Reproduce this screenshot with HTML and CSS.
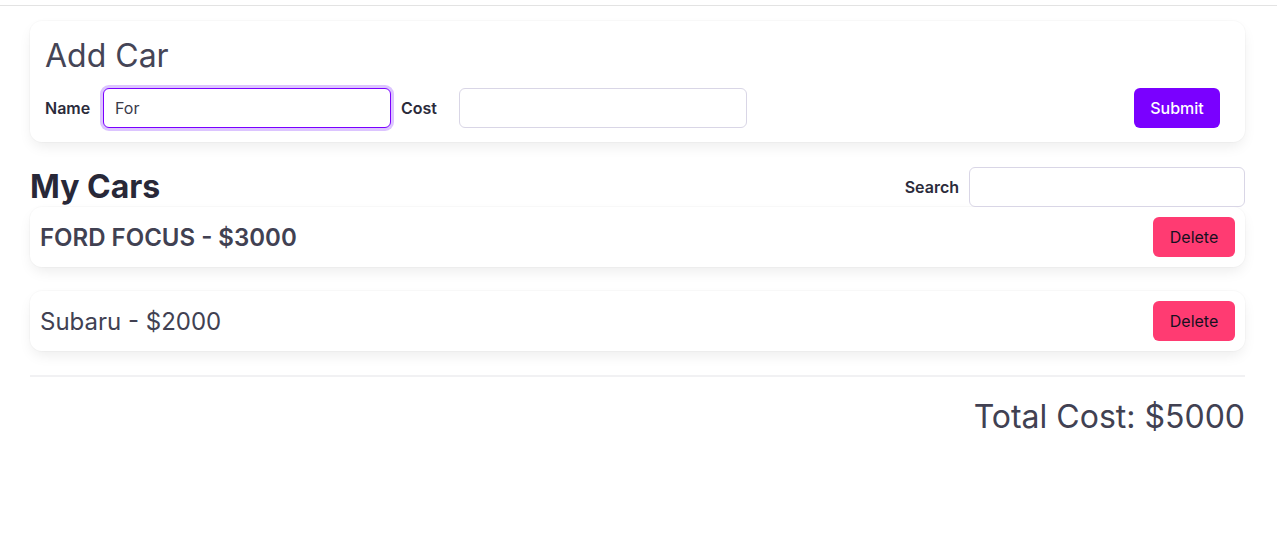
FILE: index.html
```html
<!DOCTYPE html>
<html>
<head>
<meta charset="utf-8">
<link rel="stylesheet" href="styles.css">
</head>
<body>
<div class="topline"></div>
<div class="container">
  <section class="card add-card">
    <h3 class="title">Add Car</h3>
    <form class="form-row">
      <label class="label">Name</label>
      <input class="input focused" type="text" value="For">
      <label class="label">Cost</label>
      <input class="input" type="text" value="">
      <button class="btn submit" type="button">Submit</button>
    </form>
  </section>

  <div class="list-header">
    <h3 class="heading">My Cars</h3>
    <div class="search">
      <label class="label">Search</label>
      <input class="input search-input" type="text">
    </div>
  </div>

  <div class="card row">
    <p class="car-name bold">FORD FOCUS - $3000</p>
    <button class="btn delete" type="button">Delete</button>
  </div>
  <div class="card row second">
    <p class="car-name">Subaru - $2000</p>
    <button class="btn delete" type="button">Delete</button>
  </div>

  <hr class="divider">
  <div class="total">Total Cost: $5000</div>
</div>
</body>
</html>
```
FILE: styles.css
```css
* { box-sizing: border-box; }
html, body { margin: 0; padding: 0; background: #fff; }
body {
  font-family: Inter, "Noto Sans", sans-serif;
  color: #414152;
}
.topline {
  margin-top: 5px;
  height: 1px;
  background: #e3e3e3;
}
.container {
  width: 1215px;
  margin: 15px 0 0 30px;
}
.card {
  background: #fff;
  border-radius: 12px;
  box-shadow: 0 6px 14px -2px rgba(10, 10, 10, 0.08), 0 0 0 1px rgba(10, 10, 10, 0.02);
}
.add-card {
  padding: 15px 15px 14px 15px;
}
.title {
  margin: 0 0 12px 0;
  font-size: 32px;
  line-height: 40px;
  font-weight: 400;
  color: #454556;
}
.form-row {
  display: flex;
  align-items: center;
  margin: 0;
}
.label {
  font-size: 16px;
  font-weight: 600;
  color: #2b2b3b;
  width: 58px;
  flex: none;
}
.input {
  width: 288px;
  height: 40px;
  border: 1px solid #d9d6e6;
  border-radius: 6px;
  padding: 0 11px;
  font-family: Inter, sans-serif;
  font-size: 16px;
  color: #3a3a4a;
  outline: none;
  background: #fff;
  margin-right: 10px;
}
.input.focused {
  border-color: #7a00ff;
  box-shadow: 0 0 0 3px #dcc4ff;
}
.btn {
  height: 40px;
  border: none;
  border-radius: 6px;
  font-family: Inter, sans-serif;
  font-size: 16px;
  cursor: pointer;
}
.submit {
  margin-left: auto;
  margin-right: 10px;
  width: 86px;
  background: #7a00ff;
  color: #fff;
  font-weight: 500;
}
.list-header {
  display: flex;
  justify-content: space-between;
  align-items: center;
  margin-top: 25px;
  height: 40px;
}
.heading {
  margin: 0;
  font-size: 32px;
  font-weight: 700;
  color: #282838;
  line-height: 40px;
}
.search {
  display: flex;
  align-items: center;
}
.search .label {
  width: auto;
  margin-right: 10px;
}
.search-input {
  width: 276px;
  margin-right: 0;
}
.row {
  display: flex;
  align-items: center;
  justify-content: space-between;
  padding: 10px;
  height: 60px;
}
.row.second {
  margin-top: 24px;
}
.car-name {
  margin: 0;
  font-size: 24px;
  color: #414152;
}
.car-name.bold {
  font-weight: 600;
}
.delete {
  width: 82px;
  background: #ff3b72;
  color: #16101f;
  font-weight: 400;
}
.divider {
  margin: 24px 0 0 0;
  border: none;
  height: 2px;
  background: #f1f1f3;
}
.total {
  text-align: right;
  margin-top: 20px;
  font-size: 32px;
  line-height: 40px;
  color: #414152;
}
```
